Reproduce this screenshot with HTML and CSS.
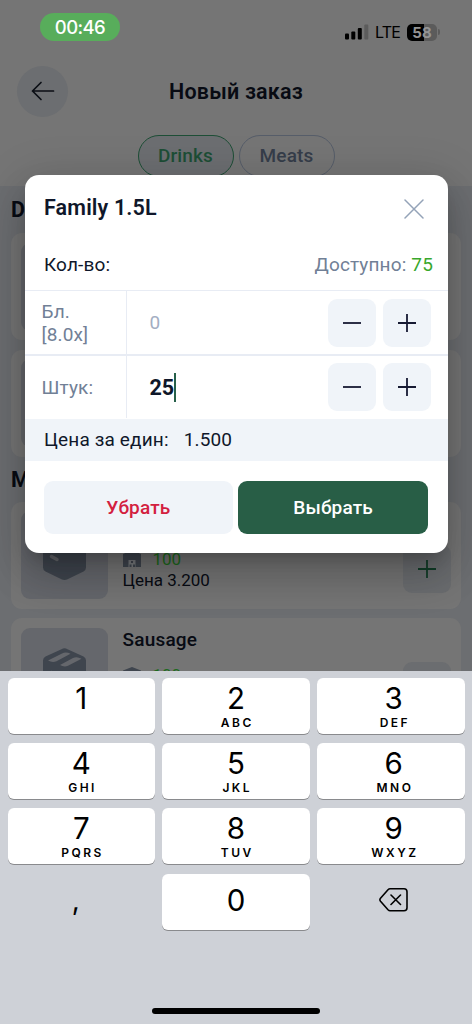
FILE: index.html
```html
<!DOCTYPE html>
<html lang="ru">
<head>
<meta charset="utf-8">
<title>Новый заказ</title>
<link rel="stylesheet" href="styles.css">
</head>
<body>
<svg width="0" height="0" class="defs">
  <symbol id="box" viewBox="0 0 43 48">
    <path d="M18.5 1.2q3-1.7 6 0l16 7.3q2.5 1.4 2.5 4v23q0 2.600-2.500 4l-16 7.700q-3 1.600-6 0l-16-7.700q-2.500-1.400-2.500-4v-23q0-2.600 2.500-4z" fill="#3f454e"/>
    <path d="M5 12.500L19 5.500q4-2 8.500 .3L13.500 13.200q-4 1.800-8.500-.7zM17 17L30 10q4-2 8.500 .8L25 17.800q-4 1.500-8-.8z" fill="#65676c"/>
    <path d="M8.500 24.500l5.500 3" stroke="#65676c" stroke-width="3.500" stroke-linecap="round"/>
  </symbol>
  <symbol id="plus" viewBox="0 0 18 18"><path d="M0 9h18M9 0v18" stroke="currentColor" stroke-width="1.800"/></symbol>
  <symbol id="minus" viewBox="0 0 18 18"><path d="M0 9h18" stroke="currentColor" stroke-width="1.800"/></symbol>
</svg>
<div class="screen">
  <div class="app">
    <header class="status">
      <span class="time">00:46</span>
      <div class="signals">
        <svg width="24" height="16" viewBox="0 0 24 16"><rect x="0" y="9.500" width="4" height="6" rx="1"/><rect x="6.300" y="7.500" width="4" height="8" rx="1"/><rect x="12.800" y="4" width="4" height="11.500" rx="1"/><rect x="19.300" y=".5" width="4" height="15" rx="1" fill="#5c5c5c"/></svg>
        <span class="lte">LTE</span>
        <span class="battery">58</span><i class="nub"></i>
      </div>
    </header>
    <div class="topbar">
      <span class="back"><svg width="24" height="20" viewBox="0 0 24 20" fill="none" stroke="#0b0e15" stroke-width="1.700" stroke-linecap="round" stroke-linejoin="round"><path d="M22.500 10H1.500M10 1.500L1.500 10l8.500 8.500"/></svg></span>
      <h1>Новый заказ</h1>
    </div>
    <nav class="chips"><span class="chip active">Drinks</span><span class="chip">Meats</span></nav>
    <main class="catalog">
      <h2>Drinks</h2>
      <div class="card"><span class="thumb"></span></div>
      <div class="card"><span class="thumb"></span></div>
      <h2>Meats</h2>
      <div class="card">
        <span class="thumb"><svg width="43" height="48"><use href="#box"/></svg></span>
        <div class="info">
          <b></b>
          <div class="stock"><svg width="18" height="17" viewBox="0 0 18 17"><path d="M0 4l9-4 9 4v13H0z" fill="#3f454e"/><path d="M5.500 10h7v7h-7z" fill="#777a7d"/><path d="M8 11h2v2H8zM6.500 14.500h2V17h-2zM10 14.500h2V17h-2z" fill="#3f454e"/></svg><em>100</em></div>
          <p>Цена 3.200</p>
        </div>
        <span class="add"><svg width="18" height="18"><use href="#plus"/></svg></span>
      </div>
      <div class="card">
        <span class="thumb"><svg width="43" height="48"><use href="#box"/></svg></span>
        <div class="info">
          <b>Sausage</b>
          <div class="stock"><svg width="18" height="17" viewBox="0 0 18 17"><path d="M9 0l9 3.500v10L9 17l-9-3.500v-10z" fill="#3f454e"/></svg><em>100</em></div>
        </div>
        <span class="add"></span>
      </div>
    </main>
  </div>

  <section class="dialog">
    <div class="title"><h3>Family 1.5L</h3><svg width="20" height="20" viewBox="0 0 20 20" stroke="#94a3b8" stroke-width="1.500" stroke-linecap="round"><path d="M1 1l18 18M19 1L1 19"/></svg></div>
    <div class="avail"><span>Кол-во:</span><span class="muted">Доступно: <i>75</i></span></div>
    <div class="qty">
      <label>Бл.<br>[8.0x]</label>
      <span class="value empty">0</span>
      <button class="step"><svg width="18" height="18"><use href="#minus"/></svg></button>
      <button class="step"><svg width="18" height="18"><use href="#plus"/></svg></button>
    </div>
    <div class="qty">
      <label>Штук:</label>
      <span class="value">25<i class="caret"></i></span>
      <button class="step"><svg width="18" height="18"><use href="#minus"/></svg></button>
      <button class="step"><svg width="18" height="18"><use href="#plus"/></svg></button>
    </div>
    <div class="price"><span>Цена за един:</span><span>1.500</span></div>
    <div class="actions"><button class="remove">Убрать</button><button class="choose">Выбрать</button></div>
  </section>

  <section class="keyboard">
    <div class="keys">
      <div class="key"><b>1</b></div>
      <div class="key"><b>2</b><small>ABC</small></div>
      <div class="key"><b>3</b><small>DEF</small></div>
      <div class="key"><b>4</b><small>GHI</small></div>
      <div class="key"><b>5</b><small>JKL</small></div>
      <div class="key"><b>6</b><small>MNO</small></div>
      <div class="key"><b>7</b><small>PQRS</small></div>
      <div class="key"><b>8</b><small>TUV</small></div>
      <div class="key"><b>9</b><small>WXYZ</small></div>
      <div class="key plain comma"><b>,</b></div>
      <div class="key zero"><b>0</b></div>
      <div class="key plain"><svg width="30" height="26" viewBox="0 0 30 26" fill="none" stroke="#000" stroke-width="1.600" stroke-linecap="round" stroke-linejoin="round"><path d="M11 1.700h14q3 0 3 3v16q0 3-3 3H11q-1 0-2-1L1.500 14.200q-1.200-1.500 0-3L9 2.700q1-1 2-1zM12 8l9.500 9.500M21.500 8L12 17.500"/></svg></div>
    </div>
    <div class="home"></div>
  </section>
</div>
</body>
</html>
```
FILE: styles.css
```css
* { box-sizing: border-box; }
body { margin: 0; font-family: Roboto, sans-serif; color: #0f172a; }
h1, h2, h3, p { margin: 0; }
i, em { font-style: normal; }
button { border: 0; padding: 0; font: inherit; }
.defs { position: absolute; }
.screen { position: relative; width: 472px; height: 1024px; overflow: hidden; background: #757575; }
.app { display: flex; flex-direction: column; height: 1024px; color: #080b13; }

.status { height: 63px; display: flex; justify-content: space-between; align-items: flex-start; padding: 13px 32px 0 40px; font-family: Inter, sans-serif; }
.time { width: 80px; height: 28px; border-radius: 14px; background: #58ad5b; color: #fff; font-size: 18.5px; font-weight: 500; line-height: 28px; text-align: center; letter-spacing: -.6px; }
.signals { display: flex; align-items: center; padding-top: 10px; color: #000; }
.lte { margin-left: 6px; width: 32px; font-size: 16px; line-height: 18px; letter-spacing: -.8px; }
.battery { width: 30px; height: 17px; border-radius: 5px; background: linear-gradient(90deg, #000 57%, #5b5b5b 57%); color: #949494; font-size: 15px; font-weight: 700; line-height: 17px; text-align: center; }
.nub { width: 2px; height: 6px; margin: 0 0 0 1px; border-radius: 0 2px 2px 0; background: #5b5b5b; }

.topbar { height: 56px; display: grid; grid-template-columns: 51px 1fr 51px; align-items: center; padding: 0 17px; }
.back { width: 51px; height: 51px; border-radius: 50%; background: #6c6e71; display: flex; align-items: center; justify-content: center; }
h1 { font-size: 21.500px; font-weight: 600; text-align: center; letter-spacing: .2px; }
.chips { height: 67px; display: flex; justify-content: center; gap: 5px; padding-top: 16px; }
.chip { width: 96px; height: 42px; border: 1px solid #565d69; border-radius: 21px; color: #353d4a; font-size: 19px; font-weight: 500; line-height: 40px; text-align: center; letter-spacing: .15px; }
.chip.active { border-color: #1d4e36; background: #6c6e71; color: #1d4e36; }

.catalog { flex: 1; padding: 0 11px; background: #6c6e71; }
h2 { height: 47px; font-size: 21.500px; font-weight: 700; line-height: 48px; }
.card { height: 107px; margin-bottom: 9.500px; padding: 9.500px; display: flex; border-radius: 11px; background: #757575; }
.card + h2 { height: 46px; margin-top: -10.500px; }
.thumb { width: 87px; height: 88px; border-radius: 9px; background: #65676c; display: flex; align-items: center; justify-content: center; }
.thumb svg { margin-top: 1px; }
.info { flex: 1; padding-left: 15px; }
.info b { display: block; height: 37px; font-size: 19px; font-weight: 500; line-height: 24px; letter-spacing: .2px; }
.stock { display: flex; align-items: center; gap: 12px; height: 21px; margin-bottom: 1px; font-size: 17px; }
.stock em { color: #1d6a1d; }
.info p { font-size: 17px; line-height: 21px; letter-spacing: 0; }
.add { width: 48px; height: 48px; margin-top: 34px; margin-right: 1px; border-radius: 9px; background: #6b6d70; color: #123d29; display: flex; align-items: center; justify-content: center; }

.dialog { position: absolute; left: 24.500px; top: 175px; width: 423px; height: 378px; border-radius: 14px; background: #fff; box-shadow: 0 11px 15px -7px rgba(0,0,0,.2), 0 24px 38px 3px rgba(0,0,0,.14), 0 9px 46px 8px rgba(0,0,0,.12); }
.title { height: 66px; display: flex; justify-content: space-between; align-items: center; padding: 1px 24px 0 19.500px; }
h3 { margin-top: -3px; font-size: 21.500px; font-weight: 600; letter-spacing: .15px; }
.avail { height: 49px; display: flex; justify-content: space-between; padding: 0 14.500px 0 19.500px; font-size: 19px; line-height: 47px; letter-spacing: .15px; }
.muted { color: #718096; }
.muted i { color: #38a72b; }
.qty { height: 64px; display: flex; align-items: center; gap: 6.500px; padding-right: 17px; border-top: 1px solid #e8ecf4; font-size: 19px; letter-spacing: .15px; }
.qty + .qty { height: 65px; padding-bottom: 1px; border-top-width: 2px; }
.qty label { width: 102.500px; height: 100%; padding: 0 17px; display: flex; align-items: center; border-right: 1.500px solid #e8ecf4; color: #718096; line-height: 23px; }
.value { flex: 1; display: flex; align-items: center; padding-left: 16px; font-size: 21.500px; font-weight: 700; letter-spacing: 0; }
.value.empty { font-size: 19px; font-weight: 400; color: #a3aec2; }
.caret { width: 2px; height: 29px; background: #27604a; }
.step { width: 48px; height: 48px; border-radius: 9px; background: #f0f4f9; color: #171a33; display: flex; align-items: center; justify-content: center; }
.price { height: 42px; display: flex; gap: 15px; padding-left: 19.500px; background: #f0f4f9; font-size: 19px; line-height: 42px; letter-spacing: .15px; }
.actions { display: grid; grid-template-columns: 1fr 1fr; gap: 5px; padding: 19.500px 19.500px 19.500px 19px; }
.actions button { height: 53px; border-radius: 9px; font-size: 19px; font-weight: 500; letter-spacing: .15px; }
.remove { background: #f0f4f9; color: #d3203f; }
.choose { background: #285e46; color: #fff; }

.keyboard { position: absolute; left: 0; top: 671px; width: 472px; height: 353px; padding: 7px 7.500px 0; background: #ced1d7; font-family: Inter, sans-serif; color: #000; }
.keys { display: grid; grid-template-columns: repeat(3, 1fr); grid-auto-rows: 56px; gap: 9.200px 7px; }
.key { display: flex; flex-direction: column; align-items: center; padding-top: 3.500px; border-radius: 6px; background: #fff; box-shadow: 0 1px 0 #898a8d; }
.key:nth-child(3n) { padding-left: 6px; }
.key b { height: 33px; font-size: 29.500px; font-weight: 400; line-height: 33px; }
.key small { font-size: 12px; font-weight: 600; line-height: 15px; letter-spacing: 2.500px; margin-right: -2.500px; }
.key.plain { justify-content: center; padding-top: 0; padding-bottom: 3px; background: none; box-shadow: none; }
.comma b { margin: 0 11px 0 0; font-size: 28px; }
.key.zero { padding-top: 10px; }
.home { width: 168px; height: 6px; margin: 78px auto 0; border-radius: 3px; background: #000; }
```
